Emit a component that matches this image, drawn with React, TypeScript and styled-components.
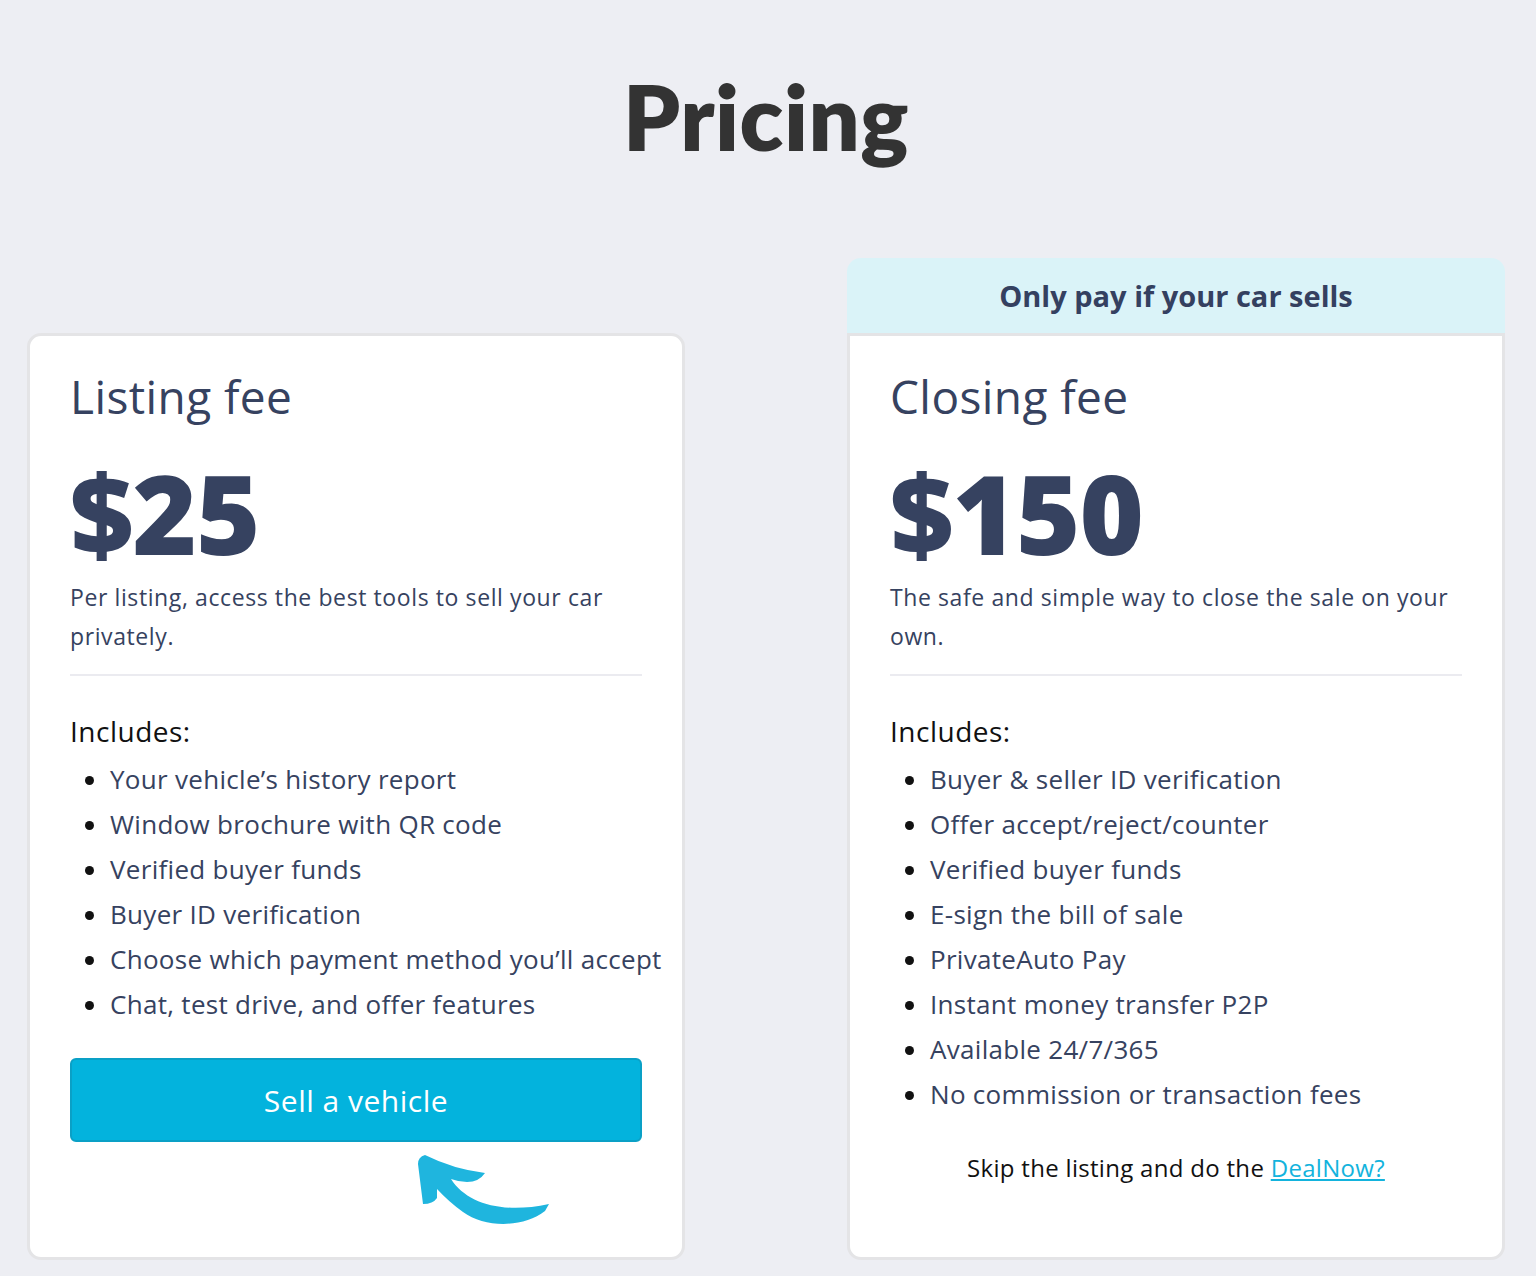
import React from 'react';
import styled, { createGlobalStyle } from 'styled-components';

const GlobalStyle = createGlobalStyle`
  html, body {
    margin: 0;
    padding: 0;
    background: #edeef3;
  }
  body {
    font-family: "Open Sans", Lato, sans-serif;
    -webkit-font-smoothing: antialiased;
  }
`;

const listingItems = [
  'Your vehicle’s history report',
  'Window brochure with QR code',
  'Verified buyer funds',
  'Buyer ID verification',
  'Choose which payment method you’ll accept',
  'Chat, test drive, and offer features',
];

const closingItems = [
  'Buyer & seller ID verification',
  'Offer accept/reject/counter',
  'Verified buyer funds',
  'E-sign the bill of sale',
  'PrivateAuto Pay',
  'Instant money transfer P2P',
  'Available 24/7/365',
  'No commission or transaction fees',
];

const CurvedArrow = () => (
  <ArrowSvg width="140" height="76" viewBox="0 0 140 76">
    <path
      d="M10 3 Q38 17 70 21 Q64 30 52 30 Q44 30 36 27 C52 52 88 62 134 52 L130 59 C108 76 70 76 48 60 Q34 50 22 37 L22 46 Q18 52 8 52 L3 12 Q3 5 10 3 Z"
      fill="#1fb5de"
    />
  </ArrowSvg>
);

export default function App() {
  return (
    <>
      <GlobalStyle />
      <Page>
        <Title>Pricing</Title>
        <Plans>
          <Banner>Only pay if your car sells</Banner>
          <Card $column={1}>
            <PlanName>Listing fee</PlanName>
            <Price>$25</Price>
            <Blurb>Per listing, access the best tools to sell your car privately.</Blurb>
            <Divider />
            <IncludesLabel>Includes:</IncludesLabel>
            <FeatureList>
              {listingItems.map((item) => (
                <li key={item}>{item}</li>
              ))}
            </FeatureList>
            <SellButton type="button">Sell a vehicle</SellButton>
            <ArrowRow>
              <CurvedArrow />
            </ArrowRow>
          </Card>
          <Card $column={2} $attached>
            <PlanName>Closing fee</PlanName>
            <Price>$150</Price>
            <Blurb>The safe and simple way to close the sale on your own.</Blurb>
            <Divider />
            <IncludesLabel>Includes:</IncludesLabel>
            <FeatureList>
              {closingItems.map((item) => (
                <li key={item}>{item}</li>
              ))}
            </FeatureList>
            <SkipNote>
              Skip the listing and do the <a href="#dealnow">DealNow?</a>
            </SkipNote>
          </Card>
        </Plans>
      </Page>
    </>
  );
}

const Page = styled.div`
  padding: 62px 31px 18px 27px;
`;

const Title = styled.h1`
  margin: 0;
  text-align: center;
  font-family: Lato, "Open Sans", sans-serif;
  font-size: 90px;
  font-weight: 800;
  color: #333333;
  line-height: 108px;
  letter-spacing: 0.5px;
`;

const Plans = styled.div`
  display: grid;
  grid-template-columns: minmax(0, 1fr) minmax(0, 1fr);
  column-gap: 162px;
  margin-top: 88px;
`;

const Banner = styled.div`
  grid-column: 2;
  grid-row: 1;
  height: 75px;
  display: flex;
  align-items: center;
  justify-content: center;
  background: #daf3f8;
  border-radius: 14px 14px 0 0;
  font-size: 29px;
  font-weight: 700;
  color: #344060;
`;

const Card = styled.section<{ $column: number; $attached?: boolean }>`
  grid-column: ${(p) => p.$column};
  grid-row: 2;
  min-width: 0;
  display: flex;
  flex-direction: column;
  background: #ffffff;
  border: 3px solid #e4e4e6;
  border-radius: ${(p) => (p.$attached ? '0 0 14px 14px' : '14px')};
  padding: 30px 40px 29px 40px;
  color: #364260;
`;

const PlanName = styled.h2`
  margin: 0;
  font-size: 46px;
  font-weight: 400;
  line-height: 60px;
  letter-spacing: 0.4px;
`;

const Price = styled.div`
  margin-top: 28px;
  font-size: 110px;
  font-weight: 800;
  line-height: 116px;
  letter-spacing: -1px;
`;

const Blurb = styled.p`
  margin: 8px 0 0;
  font-size: 23px;
  line-height: 39px;
  letter-spacing: 0.6px;
`;

const Divider = styled.hr`
  margin: 18px 0 0;
  border: none;
  height: 2px;
  background: #ebebf0;
`;

const IncludesLabel = styled.h3`
  margin: 35px 0 0;
  font-size: 28px;
  font-weight: 400;
  line-height: 40px;
  letter-spacing: 0.5px;
  color: #111111;
`;

const FeatureList = styled.ul`
  margin: 6px 0 0;
  padding-left: 40px;
  font-size: 26px;
  line-height: 45px;
  letter-spacing: 0.3px;

  li {
    white-space: nowrap;
  }

  li::marker {
    color: #111111;
  }
`;

const SellButton = styled.button`
  margin-top: 31px;
  height: 84px;
  border: 2px solid #0aa0c6;
  border-radius: 6px;
  background: #03b3dd;
  color: #ffffff;
  font-family: inherit;
  font-size: 30px;
  letter-spacing: 0.5px;
  cursor: pointer;
`;

const ArrowRow = styled.div`
  display: flex;
  padding: 10px 0 0 345px;
`;

const ArrowSvg = styled.svg`
  display: block;
`;

const SkipNote = styled.p`
  margin: 35px 0 0;
  text-align: center;
  font-size: 24px;
  line-height: 32px;
  letter-spacing: 0.3px;
  color: #111111;

  a {
    color: #13b3dd;
    text-decoration: underline;
  }
`;
